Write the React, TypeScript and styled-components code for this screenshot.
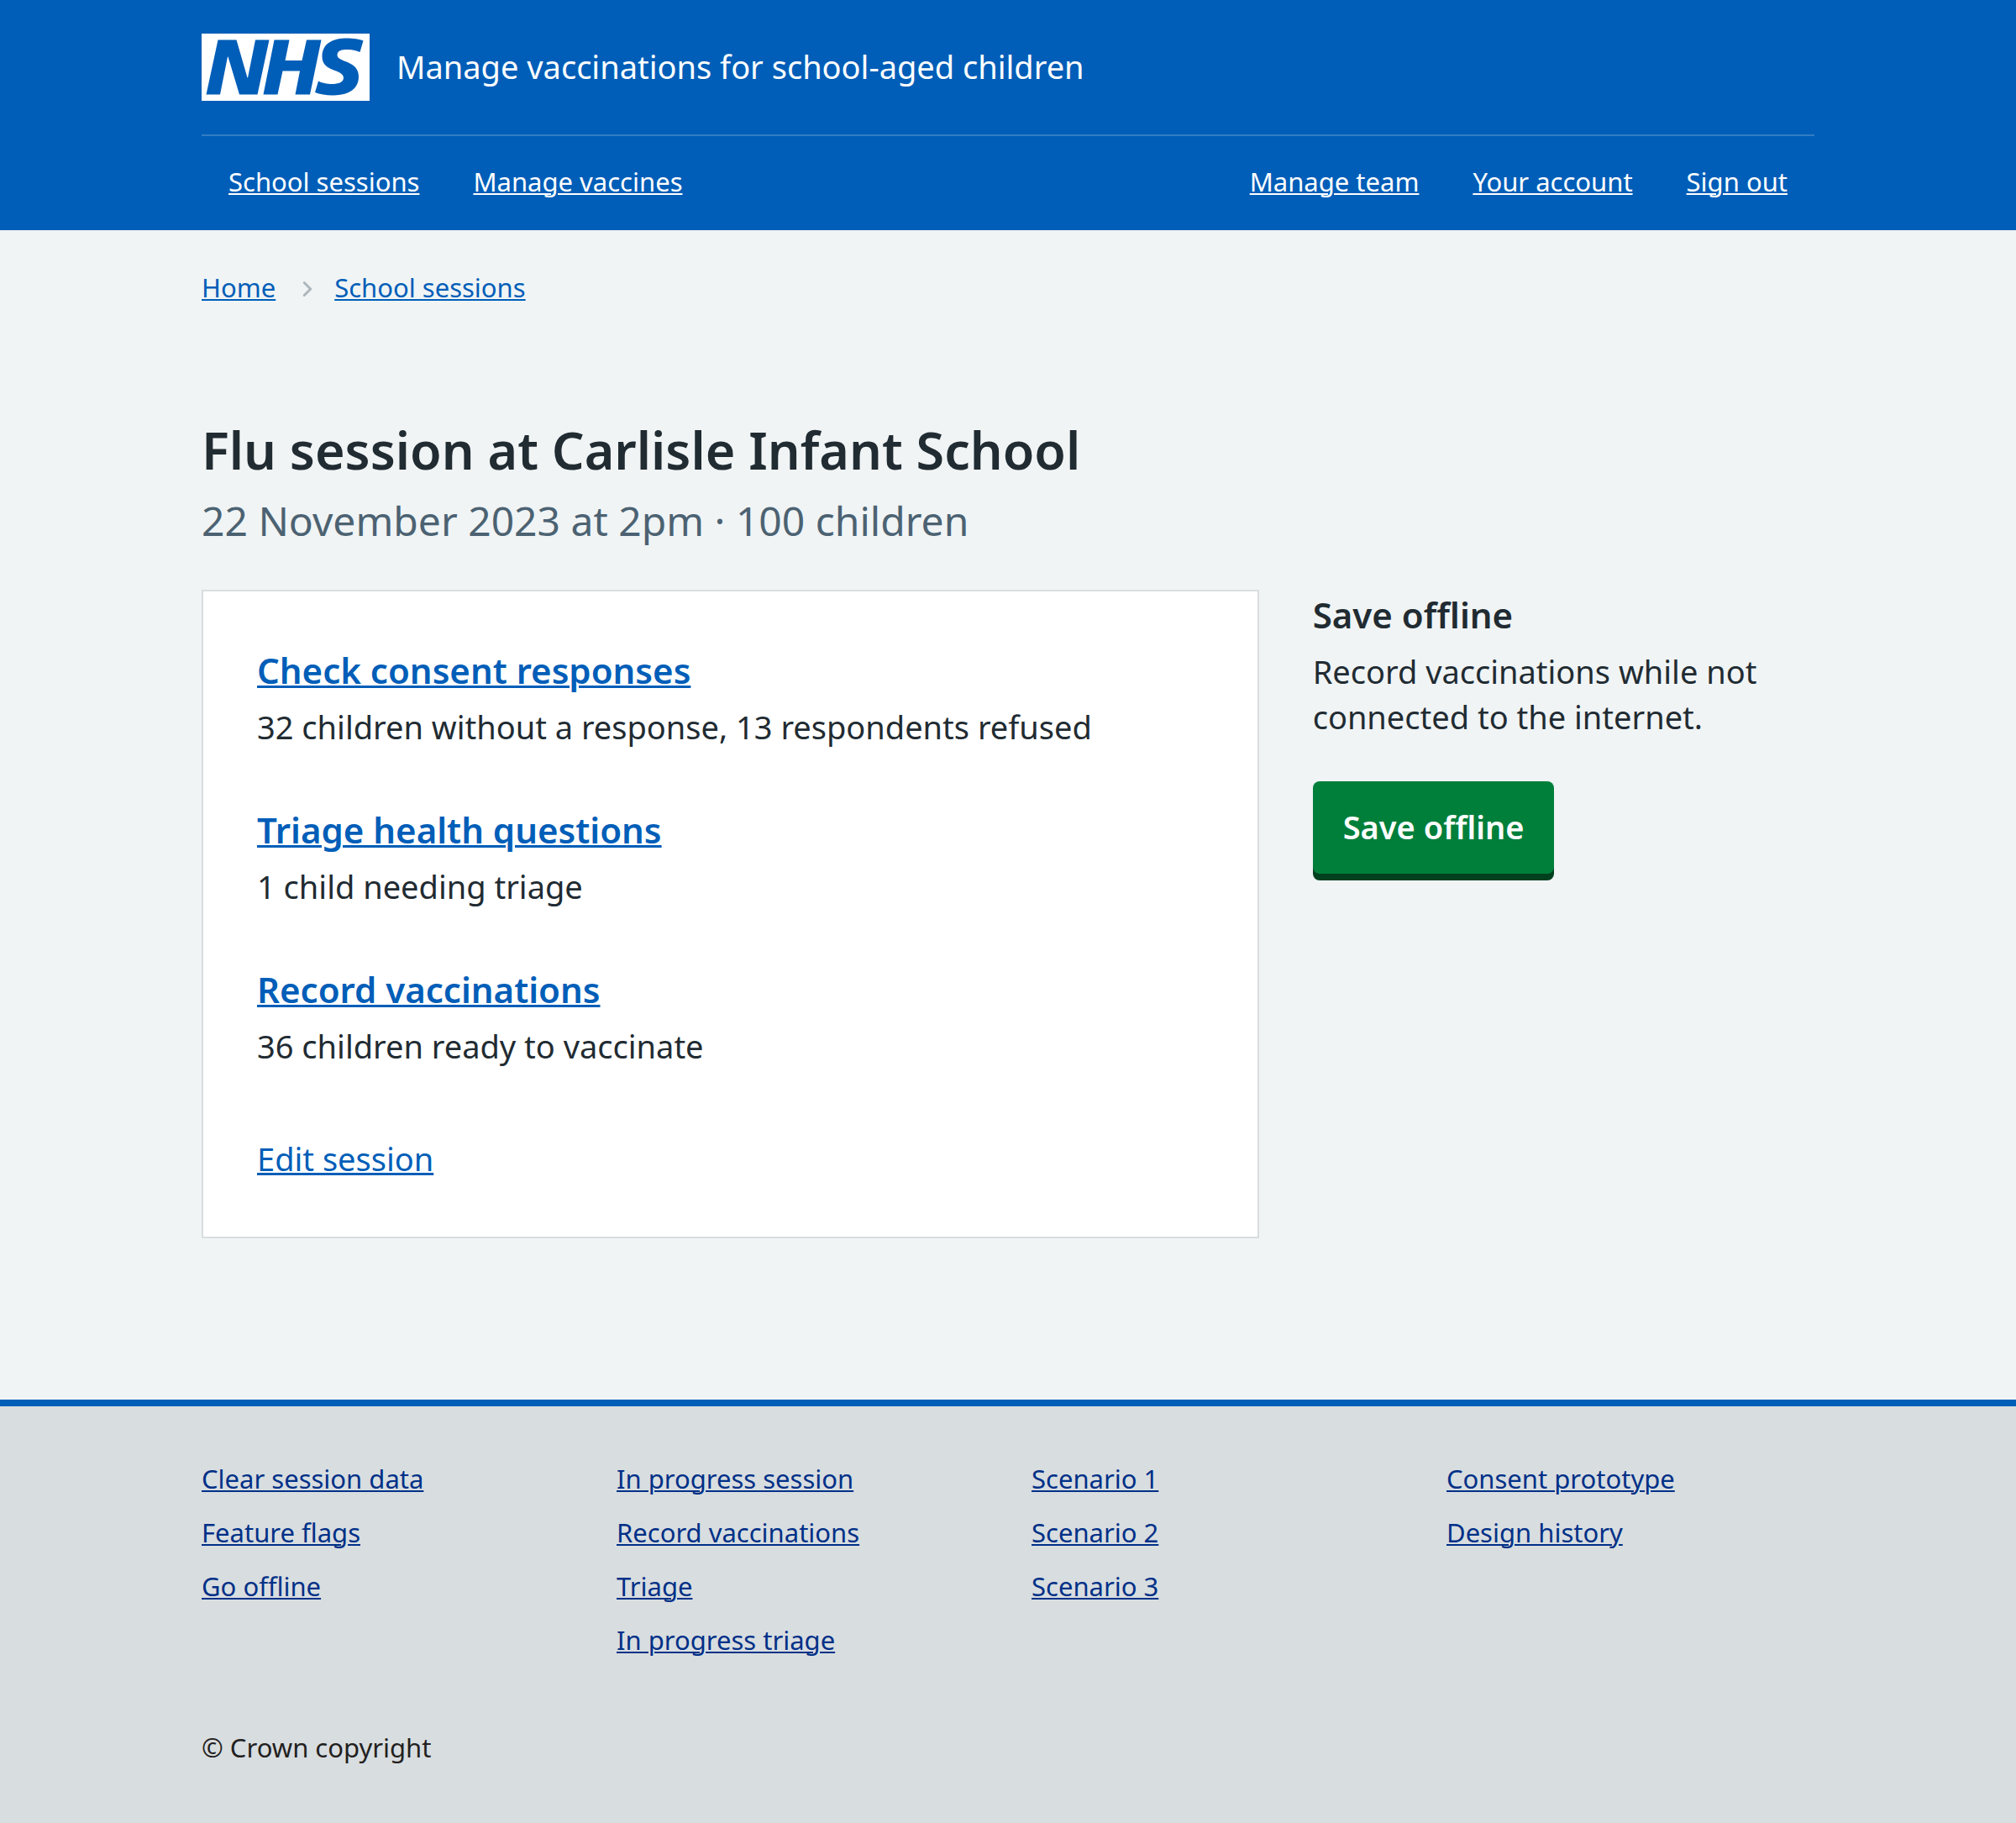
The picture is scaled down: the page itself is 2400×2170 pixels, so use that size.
import React from "react";
import styled, { createGlobalStyle } from "styled-components";

const color = {
  blue: "#005eb8",
  darkBlue: "#003087",
  text: "#212b32",
  secondary: "#4c6272",
  page: "#f0f4f5",
  border: "#d8dde0",
  chevron: "#aeb7bd",
  green: "#007f3b",
  greenShadow: "#00401e",
  white: "#ffffff",
};

const GlobalStyle = createGlobalStyle`
  *, *::before, *::after { box-sizing: border-box; }
  html { background: ${color.border}; }
  body {
    margin: 0;
    background: ${color.page};
    color: ${color.text};
    font-family: "Noto Sans", "Open Sans", Arial, sans-serif;
    font-size: 38px;
    line-height: 54px;
    -webkit-font-smoothing: antialiased;
  }
  h1, h2, p, ul, ol { margin: 0; padding: 0; }
  ul, ol { list-style: none; }
`;

const Container = styled.div`
  max-width: 1984px;
  margin: 0 auto;
  padding: 0 32px;
`;

const Link = styled.a<{ $color?: string; $thick?: boolean }>`
  color: ${(p) => p.$color ?? color.blue};
  text-decoration-line: underline;
  text-decoration-thickness: ${(p) => (p.$thick ? 3 : 2)}px;
  text-underline-offset: 2px;
`;

const Header = styled.header`
  background: ${color.blue};
  color: ${color.white};
`;

const Brand = styled.div`
  display: flex;
  align-items: center;
  gap: 32px;
  padding: 40px 0;
`;

const LogoLink = styled.a`
  display: block;
  width: 200px;
  height: 80px;

  svg {
    display: block;
    width: 100%;
    height: 100%;
  }
`;

const ServiceName = styled.a`
  padding-bottom: 2px;
  color: inherit;
  text-decoration: none;
`;

const Nav = styled.nav`
  display: flex;
  flex-wrap: wrap;
  justify-content: space-between;
  border-top: 2px solid rgba(255, 255, 255, 0.2);
  font-size: 31px;
  line-height: 48px;
`;

const NavList = styled.ul`
  display: flex;
  flex-wrap: wrap;
`;

const NavItem = styled.li`
  padding: 30px 32px 34px;
`;

const Breadcrumb = styled.ol`
  display: flex;
  align-items: center;
  padding-top: 44px;
  font-size: 31px;
  line-height: 48px;
`;

const Crumb = styled.li`
  display: flex;
  align-items: center;
`;

const Chevron = styled.svg`
  width: 36px;
  height: 36px;
  margin: 4px 14px 0 20px;
  fill: ${color.chevron};
`;

const Main = styled.main`
  padding: 134px 0 192px;
`;

const Title = styled.h1`
  margin-bottom: 18px;
  font-size: 61px;
  font-weight: 600;
  line-height: 72px;
`;

const Caption = styled.p`
  margin-bottom: 52px;
  color: ${color.secondary};
  font-size: 48px;
  line-height: 60px;
`;

const Row = styled.div`
  display: grid;
  grid-template-columns: 2fr 1fr;
  align-items: start;
  margin: 0 -32px;
`;

const Column = styled.div`
  padding: 0 32px;
`;

const Card = styled.div`
  padding: 64px 64px 66px;
  background: ${color.white};
  border: 2px solid ${color.border};
`;

const TaskList = styled.ul`
  display: flex;
  flex-direction: column;
  gap: 66px;
  margin-bottom: 80px;
`;

const Heading = styled.h2`
  margin-bottom: 10px;
  font-size: 42px;
  font-weight: 600;
  line-height: 60px;
`;

const Button = styled.button`
  margin: 50px 0 8px;
  padding: 27px 36px 29px;
  background: ${color.green};
  border: 0;
  border-radius: 8px;
  box-shadow: 0 8px 0 ${color.greenShadow};
  color: ${color.white};
  cursor: pointer;
  font: inherit;
  font-weight: 600;
`;

const Footer = styled.footer`
  padding: 62px 0 66px;
  background: ${color.border};
  border-top: 8px solid ${color.blue};
  font-size: 31px;
  line-height: 48px;
`;

const FooterGrid = styled.div`
  display: grid;
  grid-template-columns: repeat(4, 1fr);
  gap: 56px;
  margin-bottom: 80px;
`;

const FooterList = styled.ul`
  display: flex;
  flex-direction: column;
  gap: 16px;
`;

const Copyright = styled.p`
  color: #231f20;
`;

const primaryNav = ["School sessions", "Manage vaccines"];
const accountNav = ["Manage team", "Your account", "Sign out"];

const tasks = [
  {
    title: "Check consent responses",
    detail: "32 children without a response, 13 respondents refused",
  },
  { title: "Triage health questions", detail: "1 child needing triage" },
  { title: "Record vaccinations", detail: "36 children ready to vaccinate" },
];

const footerColumns = [
  ["Clear session data", "Feature flags", "Go offline"],
  ["In progress session", "Record vaccinations", "Triage", "In progress triage"],
  ["Scenario 1", "Scenario 2", "Scenario 3"],
  ["Consent prototype", "Design history"],
];

function NavLinks({ items }: { items: string[] }) {
  return (
    <NavList>
      {items.map((item) => (
        <NavItem key={item}>
          <Link href="#" $color={color.white}>
            {item}
          </Link>
        </NavItem>
      ))}
    </NavList>
  );
}

function Logo() {
  return (
    <LogoLink href="#" aria-label="NHS">
      <svg viewBox="0 0 40 16" aria-hidden="true">
        <path fill={color.white} d="M0 0h40v16H0z" />
        <path
          fill={color.blue}
          d="M3.9 1.5h4.4l2.6 9h.1l1.8-9h3.3l-2.8 13H9l-2.7-9h-.1l-1.8 9H1.1M17.3 1.5h3.6l-1 4.9h4L25 1.5h3.5l-2.7 13h-3.5l1.1-5.6h-4.1l-1.2 5.6h-3.4M37.7 4.4c-.7-.3-1.6-.6-2.9-.6-1.4 0-2.5.2-2.5 1.3 0 1.8 5.1 1.2 5.1 5.1 0 3.6-3.3 4.5-6.4 4.5-1.3 0-2.9-.3-4-.7l.8-2.7c.7.4 2.1.7 3.2.7s2.8-.2 2.8-1.5c0-2.1-5.1-1.3-5.1-5 0-3.4 2.9-4.4 5.8-4.4 1.6 0 3.1.2 4 .6"
        />
      </svg>
    </LogoLink>
  );
}

export default function App() {
  return (
    <>
      <GlobalStyle />
      <Header>
        <Container>
          <Brand>
            <Logo />
            <ServiceName href="#">
              Manage vaccinations for school-aged children
            </ServiceName>
          </Brand>
          <Nav aria-label="Primary">
            <NavLinks items={primaryNav} />
            <NavLinks items={accountNav} />
          </Nav>
        </Container>
      </Header>

      <Container>
        <nav aria-label="Breadcrumb">
          <Breadcrumb>
            <Crumb>
              <Link href="#">Home</Link>
              <Chevron viewBox="0 0 24 24" aria-hidden="true">
                <path d="M15.5 12a1 1 0 0 1-.29.71l-5 5a1 1 0 0 1-1.42-1.42l4.3-4.29-4.3-4.29a1 1 0 0 1 1.42-1.42l5 5a1 1 0 0 1 .29.71z" />
              </Chevron>
            </Crumb>
            <Crumb>
              <Link href="#">School sessions</Link>
            </Crumb>
          </Breadcrumb>
        </nav>

        <Main>
          <Title>Flu session at Carlisle Infant School</Title>
          <Caption>22 November 2023 at 2pm · 100 children</Caption>
          <Row>
            <Column>
              <Card>
                <TaskList>
                  {tasks.map((task) => (
                    <li key={task.title}>
                      <Heading>
                        <Link href="#" $thick>
                          {task.title}
                        </Link>
                      </Heading>
                      <p>{task.detail}</p>
                    </li>
                  ))}
                </TaskList>
                <p>
                  <Link href="#" $thick>
                    Edit session
                  </Link>
                </p>
              </Card>
            </Column>
            <Column>
              <Heading>Save offline</Heading>
              <p>Record vaccinations while not connected to the internet.</p>
              <Button type="button">Save offline</Button>
            </Column>
          </Row>
        </Main>
      </Container>

      <Footer>
        <Container>
          <FooterGrid>
            {footerColumns.map((links) => (
              <FooterList key={links[0]}>
                {links.map((label) => (
                  <li key={label}>
                    <Link href="#" $color={color.darkBlue}>
                      {label}
                    </Link>
                  </li>
                ))}
              </FooterList>
            ))}
          </FooterGrid>
          <Copyright>© Crown copyright</Copyright>
        </Container>
      </Footer>
    </>
  );
}
